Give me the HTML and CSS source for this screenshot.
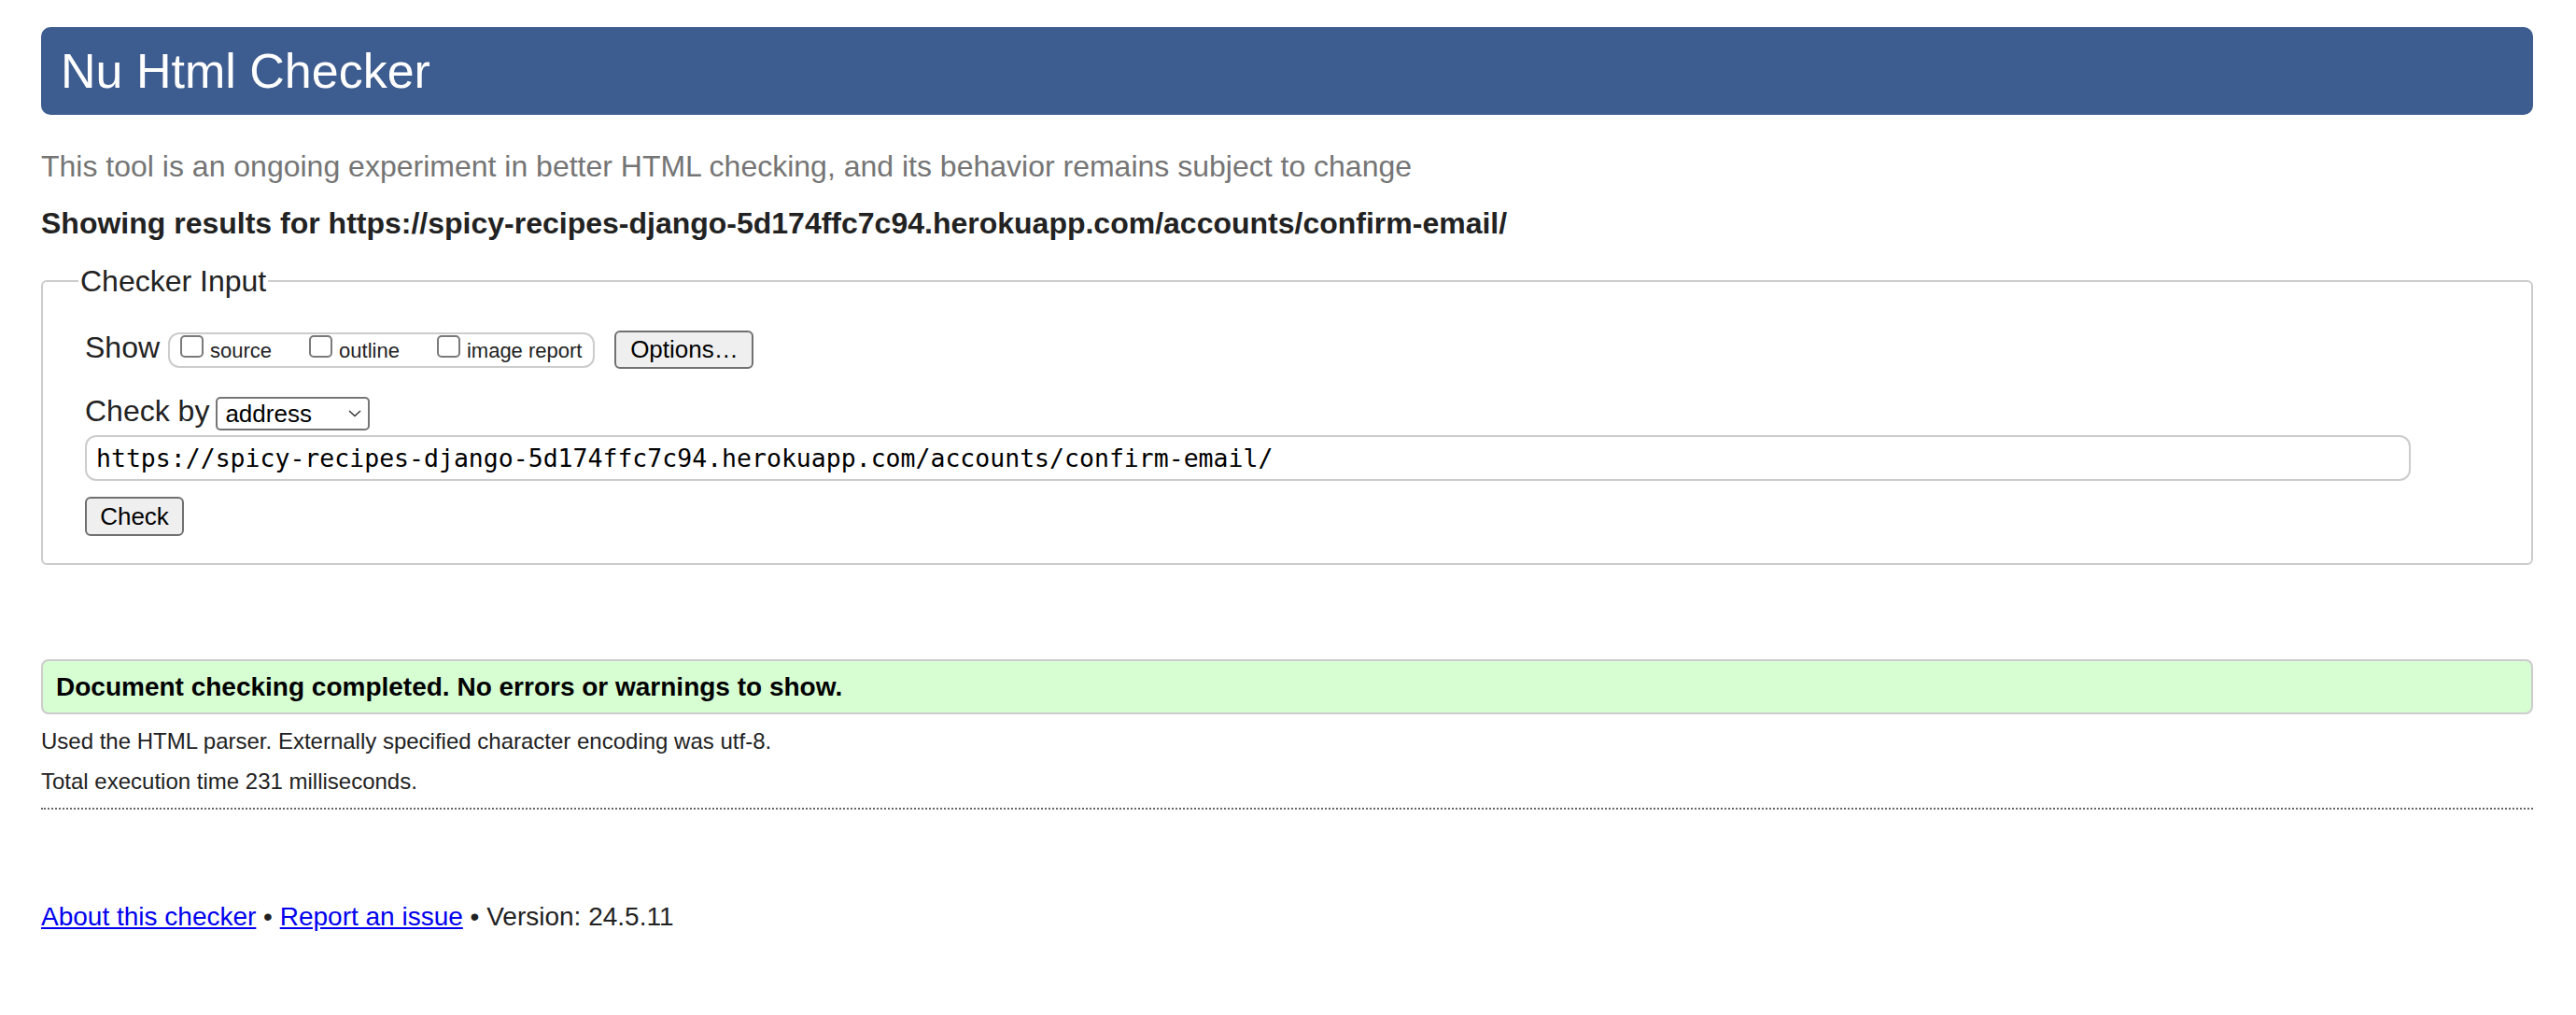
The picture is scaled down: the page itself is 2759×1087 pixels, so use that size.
FILE: index.html
```html
<!DOCTYPE html>
<html lang="en">
<head>
<meta charset="utf-8">
<title>Showing results for https://spicy-recipes-django-5d174ffc7c94.herokuapp.com/accounts/confirm-email/ - Nu Html Checker</title>
<link rel="stylesheet" href="styles.css">
</head>
<body>
<h1 class="title">Nu Html Checker</h1>
<p class="tagline">This tool is an ongoing experiment in better HTML checking, and its behavior remains subject to change</p>
<p class="showing">Showing results for https://spicy-recipes-django-5d174ffc7c94.herokuapp.com/accounts/confirm-email/</p>
<form class="checker">
  <fieldset class="input-box">
    <legend class="input-legend">Checker Input</legend>
    <div class="row row-show">
      <span class="row-label">Show</span>
      <span class="opts">
        <label class="opt"><input type="checkbox" class="cb"><span>source</span></label>
        <label class="opt"><input type="checkbox" class="cb"><span>outline</span></label>
        <label class="opt"><input type="checkbox" class="cb"><span>image report</span></label>
      </span>
      <button type="button" class="btn btn-options">Options…</button>
    </div>
    <div class="row row-by">
      <span class="row-label row-label-by">Check by</span>
      <span class="select-wrap">
        <select class="select"><option>address</option></select>
        <svg class="chev" width="14" height="8" viewBox="0 0 14 8" aria-hidden="true"><polyline points="1,1 7,6.5 13,1" fill="none" stroke="#333" stroke-width="1.4"/></svg>
      </span>
    </div>
    <div class="row row-url">
      <input class="url" type="url" value="https://spicy-recipes-django-5d174ffc7c94.herokuapp.com/accounts/confirm-email/">
    </div>
    <div class="row row-check">
      <button type="button" class="btn btn-check">Check</button>
    </div>
  </fieldset>
</form>
<p class="success">Document checking completed. No errors or warnings to show.</p>
<p class="details">Used the HTML parser. Externally specified character encoding was utf-8.</p>
<p class="details">Total execution time 231 milliseconds.</p>
<hr class="sep">
<p class="footer"><a href="#">About this checker</a> • <a href="#">Report an issue</a> • Version: 24.5.11</p>
</body>
</html>
```
FILE: styles.css
```css
html, body {
  margin: 0;
  padding: 0;
  background: #fff;
}

body {
  font-family: "Liberation Sans", Arial, Helvetica, sans-serif;
  color: #222;
  padding: 29px 46px 0 44px;
}

.title {
  margin: 0;
  height: 94px;
  line-height: 94px;
  padding: 0 0 0 21px;
  background: #3d5c8f;
  color: #fff;
  font-size: 52px;
  font-weight: normal;
  border-radius: 10px;
}

.tagline {
  margin: 35px 0 0;
  font-size: 32px;
  line-height: 40px;
  color: #757575;
}

.showing {
  margin: 21px 0 0;
  font-size: 32px;
  line-height: 40px;
  font-weight: bold;
  color: #222;
}

.checker {
  margin: 22px 0 0;
}

.input-box {
  margin: 0;
  min-width: 0;
  border: 2px solid #ccc;
  border-radius: 6px;
  padding: 33px 20px 29px 45px;
}

.input-legend {
  font-size: 32px;
  line-height: 40px;
  padding: 0 2px;
  margin-left: -7px;
}

.row {
  display: flex;
  align-items: center;
}

.row-show {
  height: 41px;
}

.row-label {
  font-size: 32px;
  line-height: 40px;
  padding-bottom: 5px;
}

.row-label-by {
  padding-bottom: 6px;
}

.opts {
  display: flex;
  align-items: flex-start;
  box-sizing: border-box;
  height: 38px;
  margin-left: 9px;
  padding: 1px 12px 0 11px;
  border: 2px solid #ccc;
  border-radius: 12px;
  gap: 40px;
}

.opt {
  display: flex;
  align-items: flex-start;
  gap: 7px;
  font-size: 22px;
  line-height: 26px;
  color: #222;
}

.opt span {
  margin-top: 4px;
}

.cb {
  -webkit-appearance: none;
  appearance: none;
  box-sizing: border-box;
  margin: 0;
  width: 25px;
  height: 24px;
  border: 2px solid #7a7a7a;
  border-radius: 5px;
  background: #fff;
}

.btn {
  box-sizing: border-box;
  font-family: "Liberation Sans", Arial, Helvetica, sans-serif;
  font-size: 26px;
  color: #000;
  background: #efefef;
  border: 2px solid #707070;
  border-radius: 6px;
  padding: 0 13px;
  margin: 0;
}

.btn-options {
  height: 41px;
  width: 149px;
  margin-left: 21px;
}

.row-by {
  margin-top: 28px;
  height: 40px;
}

.select-wrap {
  position: relative;
  display: inline-block;
  margin-left: 7px;
  height: 36px;
}

.select {
  -webkit-appearance: none;
  appearance: none;
  box-sizing: border-box;
  width: 165px;
  height: 36px;
  margin: 0;
  padding: 0 0 0 8px;
  border: 2px solid #767676;
  border-radius: 5px;
  background: #fff;
  color: #000;
  font-family: "Liberation Sans", Arial, Helvetica, sans-serif;
  font-size: 26px;
}

.chev {
  position: absolute;
  right: 9px;
  top: 14px;
}

.row-url {
  margin-top: 3px;
}

.url {
  box-sizing: border-box;
  width: 2491px;
  height: 49px;
  margin: 0;
  padding: 0 10px;
  border: 2px solid #ccc;
  border-radius: 12px;
  font-family: "DejaVu Sans Mono", "Liberation Mono", monospace;
  font-size: 26.5px;
  color: #000;
  background: #fff;
}

.row-check {
  margin-top: 17px;
}

.btn-check {
  width: 106px;
  height: 42px;
}

.success {
  box-sizing: border-box;
  margin: 101px 0 0;
  height: 59px;
  line-height: 55px;
  padding: 0 14px;
  border: 2px solid #ccc;
  border-radius: 8px;
  background: #d7fdd3;
  color: #000;
  font-size: 28px;
  font-weight: bold;
}

.details {
  margin: 15px 0 0;
  font-size: 24px;
  line-height: 28px;
  color: #222;
}

.sep {
  margin: 14px 0 0;
  height: 0;
  border: 0;
  border-top: 2px dotted #666;
}

.footer {
  margin: 97px 0 0;
  font-size: 28px;
  line-height: 36px;
  color: #222;
}

.footer a {
  color: #0000ee;
  text-decoration: underline;
}
```
